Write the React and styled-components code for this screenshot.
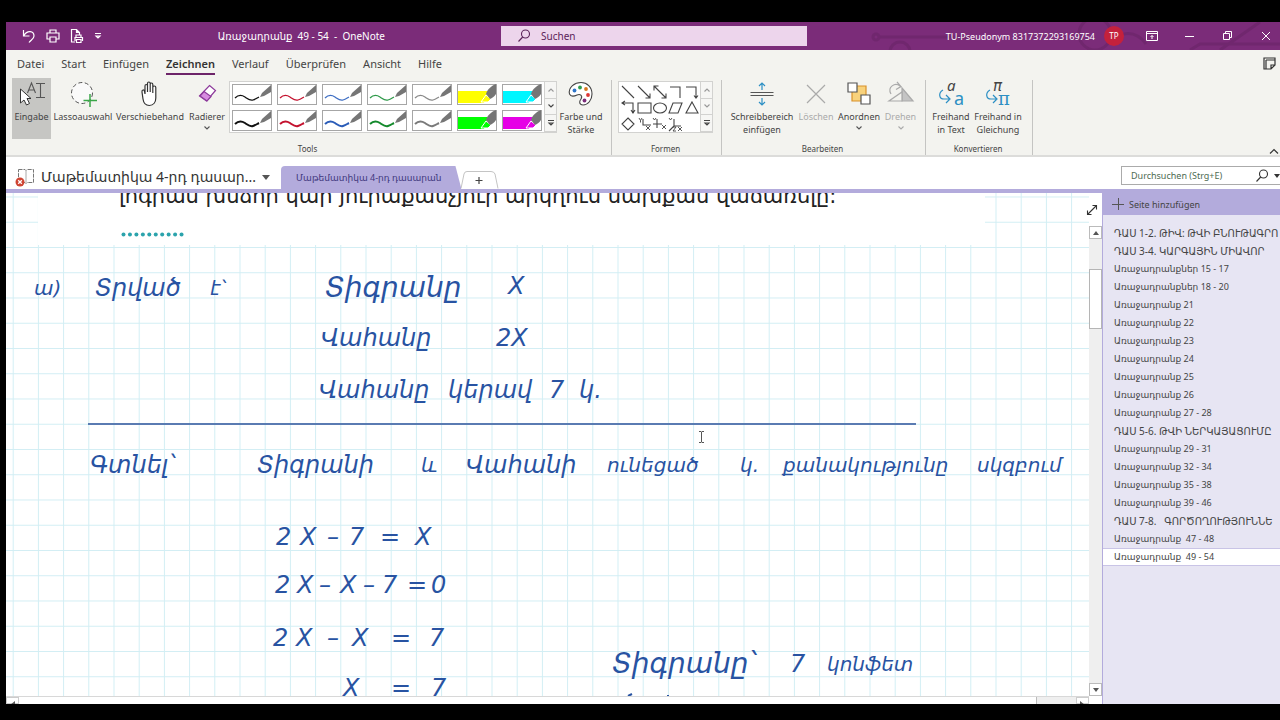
import React, { useState } from 'react'
import styled, { createGlobalStyle } from 'styled-components'

const uiFont = '"Noto Sans", "DejaVu Sans", sans-serif'

const tabs = ['Datei', 'Start', 'Einfügen', 'Zeichnen', 'Verlauf', 'Überprüfen', 'Ansicht', 'Hilfe']

const pens = [
	{ color: '#111', w: 1.3 }, { color: '#c4122f', w: 1.3 }, { color: '#3f6fc4', w: 1.3 },
	{ color: '#2f9a4a', w: 1.3 }, { color: '#8a8a8a', w: 1.3 },
	{ color: '#ffff00', marker: true }, { color: '#00f6ff', marker: true },
	{ color: '#111', w: 2 }, { color: '#c4122f', w: 2 }, { color: '#2a5cb8', w: 2 },
	{ color: '#148a2c', w: 2 }, { color: '#7a7a7a', w: 2 },
	{ color: '#00ff00', marker: true }, { color: '#e600e6', marker: true },
]

const pages = [
	'ԴԱՍ 1-2. ԹԻՎ: ԹՎԻ ԲՆՈՒԹԱԳՐՈ',
	'ԴԱՍ 3-4. ԿԱՐԳԱՅԻՆ ՄԻԱՎՈՐ',
	'Առաջադրանքներ 15 - 17',
	'Առաջադրանքներ 18 - 20',
	'Առաջադրանք 21',
	'Առաջադրանք 22',
	'Առաջադրանք 23',
	'Առաջադրանք 24',
	'Առաջադրանք 25',
	'Առաջադրանք 26',
	'Առաջադրանք 27 - 28',
	'ԴԱՍ 5-6. ԹՎԻ ՆԵՐԿԱՅԱՑՈՒՄԸ',
	'Առաջադրանք 29 - 31',
	'Առաջադրանք 32 - 34',
	'Առաջադրանք 35 - 38',
	'Առաջադրանք 39 - 46',
	'ԴԱՍ 7-8.   ԳՈՐԾՈՂՈՒԹՅՈՒՆՆԵ',
	'Առաջադրանք  47 - 48',
	'Առաջադրանք  49 - 54',
]

// ink notes, placed freely on the page canvas
const notes = [
	{ x: 28, y: 75, size: 20, text: 'ա)' },
	{ x: 89, y: 75, size: 24, text: 'Տրված' },
	{ x: 204, y: 75, size: 20, text: 'է՝' },
	{ x: 319, y: 75, size: 28, text: 'Տիգրանը' },
	{ x: 502, y: 73, size: 24, text: 'X' },
	{ x: 315, y: 125, size: 24, text: 'Վահանը' },
	{ x: 490, y: 125, size: 24, text: '2X' },
	{ x: 313, y: 177, size: 24, text: 'Վահանը' },
	{ x: 442, y: 177, size: 24, text: 'կերավ' },
	{ x: 543, y: 177, size: 24, text: '7' },
	{ x: 573, y: 177, size: 24, text: 'կ.' },
	{ x: 84, y: 252, size: 24, text: 'Գտնել՝' },
	{ x: 251, y: 252, size: 24, text: 'Տիգրանի' },
	{ x: 415, y: 252, size: 20, text: 'և' },
	{ x: 460, y: 252, size: 24, text: 'Վահանի' },
	{ x: 601, y: 252, size: 20, text: 'ունեցած' },
	{ x: 734, y: 252, size: 20, text: 'կ.' },
	{ x: 777, y: 252, size: 20, text: 'քանակությունը' },
	{ x: 971, y: 252, size: 20, text: 'սկզբում' },
	{ x: 270, y: 324, size: 24, text: '2' },
	{ x: 294, y: 324, size: 24, text: 'X' },
	{ x: 321, y: 324, size: 24, text: '–' },
	{ x: 343, y: 324, size: 24, text: '7' },
	{ x: 374, y: 324, size: 24, text: '=' },
	{ x: 409, y: 324, size: 24, text: 'X' },
	{ x: 269, y: 372, size: 24, text: '2' },
	{ x: 291, y: 372, size: 24, text: 'X' },
	{ x: 313, y: 372, size: 24, text: '–' },
	{ x: 334, y: 372, size: 24, text: 'X' },
	{ x: 357, y: 372, size: 24, text: '–' },
	{ x: 376, y: 372, size: 24, text: '7' },
	{ x: 401, y: 372, size: 24, text: '=' },
	{ x: 425, y: 372, size: 24, text: '0' },
	{ x: 267, y: 425, size: 24, text: '2' },
	{ x: 290, y: 425, size: 24, text: 'X' },
	{ x: 321, y: 425, size: 24, text: '–' },
	{ x: 346, y: 425, size: 24, text: 'X' },
	{ x: 385, y: 425, size: 24, text: '=' },
	{ x: 423, y: 425, size: 24, text: '7' },
	{ x: 337, y: 475, size: 24, text: 'X' },
	{ x: 385, y: 475, size: 24, text: '=' },
	{ x: 425, y: 475, size: 24, text: '7' },
	{ x: 606, y: 451, size: 28, text: 'Տիգրանը՝' },
	{ x: 784, y: 451, size: 24, text: '7' },
	{ x: 821, y: 451, size: 20, text: 'կոնֆետ' },
]

const Pen = ({ color, w, marker }) => (
	<svg width="40" height="21" viewBox="0 0 40 21">
		<rect x=".5" y=".5" width="39" height="20" fill="#fff" stroke="#a6a6a6" />
		{marker ? (
			<>
				<path d="M1 7h30l-4 12H1z" fill={color} />
				<path d="M24 18l5-7 5 4-3 3z" fill={color} stroke="#fff" />
				<path d="M29 10c1-4 5-8 10-10v10c-2 3-4 4-6 5z" fill="#757575" />
			</>
		) : (
			<>
				<path d="M3 14c4-4 7-3 10-1s5 4 8 3 4-2 6-3" fill="none" stroke={color} strokeWidth={w} />
				<path d="M28 13l2-4 9-8v7l-7 4z" fill="#757575" />
			</>
		)}
	</svg>
)

const Chevron = ({ up, color = '#555' }) => (
	<svg width="8" height="6" viewBox="0 0 8 6" fill="none" stroke={color} strokeWidth="1.1">
		<path d={up ? 'M1.5 4.5L4 2l2.5 2.5' : 'M1.5 1.5L4 4l2.5-2.5'} />
	</svg>
)

const More = () => (
	<svg width="8" height="8" viewBox="0 0 8 8" fill="none" stroke="#444" strokeWidth="1.1">
		<path d="M1 1.5h6M2 4l2 2 2-2z" />
	</svg>
)

const SearchIcon = ({ size = 14, color }) => (
	<svg width={size} height={size} viewBox="0 0 14 14" fill="none" stroke={color} strokeWidth="1.1">
		<circle cx="8.5" cy="5" r="4" />
		<path d="M5.7 8L1.5 12.5" />
	</svg>
)

const icons = {
	eingabe: (
		<svg width="28" height="26" viewBox="0 0 28 26" fill="none" stroke="#555">
			<path d="M9.500 12l4-10 4 10M11 9h5M18 2.500h9M18 16.500h9M22.500 2.500v14" strokeWidth="1.100" />
			<path d="M2.500 8v14l3.500-3 2.500 5 3-1.500-2.500-5h4z" fill="#fff" stroke="#333" />
		</svg>
	),
	lasso: (
		<svg width="28" height="26" viewBox="0 0 28 26" fill="none">
			<circle cx="13" cy="12" r="10.500" stroke="#555" strokeDasharray="4 2.500" fill="#fafafa" />
			<path d="M21 13v13M14.500 19.500H28" stroke="#3aa648" strokeWidth="1.500" />
		</svg>
	),
	hand: (
		<svg width="20" height="26" viewBox="0 0 20 26" fill="#fff" stroke="#333" strokeWidth="1.200">
			<path d="M3 18L2 11c-.3-2.500 2-2.700 2.500-.6L5 13V5c0-2 2.500-2 2.500 0v6-8.500c0-2 2.700-2 2.700 0V11 3.500c0-2 2.600-2 2.600 0V12 6.500c0-2 3-2 3 0V17c0 4-2.200 7.500-6.500 7.500-4 0-5.800-3-6.300-6.500z" />
		</svg>
	),
	eraser: (
		<svg width="22" height="26" viewBox="0 0 22 26" stroke="#8d3a9b" strokeWidth="1.200">
			<path d="M13.500 4.500l6 5-9 10.500-7-5z" fill="#fff" />
			<path d="M8 10.500l7 5-4 4.500-7-5z" fill="#d78ce0" />
		</svg>
	),
	palette: (
		<svg width="26" height="26" viewBox="0 0 26 26">
			<path d="M1.500 13C0 6 7 1.500 13 1.500c6 0 11 4.500 11 11.500 0 6-4 11-9 11-4 0-4-3.500-2-6 2-3.500-1-5.500-4-4-3 1.500-6 2-7.500-1z" fill="#fff" stroke="#444" strokeWidth="1.100" />
			<circle cx="6.500" cy="9.500" r="1.900" fill="#2e75c9" />
			<circle cx="12" cy="6.500" r="1.900" fill="#2f9e4e" />
			<circle cx="18" cy="8" r="1.900" fill="#d8761c" />
			<circle cx="20" cy="14" r="1.900" fill="#dc3535" />
			<circle cx="16.500" cy="19.500" r="1.900" fill="#7b2c79" />
		</svg>
	),
	space: (
		<svg width="26" height="26" viewBox="0 0 26 26" fill="none">
			<path d="M1.500 11.500h23M1.500 14.500h23" stroke="#555" strokeWidth="1.200" />
			<path d="M13 9V2M10 5l3-3 3 3M13 17v7M10 21l3 3 3-3" stroke="#2c8fc4" strokeWidth="1.200" />
		</svg>
	),
	remove: (
		<svg width="22" height="26" viewBox="0 0 22 26" stroke="#aaa" strokeWidth="1.200">
			<path d="M2 4l18 18M20 4L2 22" />
		</svg>
	),
	arrange: (
		<svg width="26" height="26" viewBox="0 0 26 26" strokeWidth="1.200">
			<path d="M6 5h14v15H6z" fill="#f8d27c" stroke="#d9922b" />
			<path d="M2 2h9v9H2zM15 14h9v9h-9z" fill="#fff" stroke="#555" />
		</svg>
	),
	rotate: (
		<svg width="26" height="26" viewBox="0 0 26 26" fill="none" stroke="#aaa" strokeWidth="1.200">
			<path d="M14 7l11 13H14z" fill="#c4c4c4" />
			<path d="M14 11v9H1z" fill="#f3f3ef" />
			<path d="M3 13C-1 6 7 1 12 5M9 1l4 4.500-5 3" />
		</svg>
	),
	inkText: (
		<svg width="26" height="26" viewBox="0 0 26 26" fill="none">
			<text x="9" y="10" fontFamily="Noto Sans" fontStyle="italic" fontSize="15" fill="#444">a</text>
			<text x="16" y="24" fontFamily="Noto Sans" fontSize="18" fill="#2c8fc4">a</text>
			<path d="M5 9c-5 3-4 9 1 9h5M8 14l4 4-4 4" stroke="#2c8fc4" strokeWidth="1.200" />
		</svg>
	),
	inkMath: (
		<svg width="26" height="26" viewBox="0 0 26 26" fill="none">
			<text x="8" y="10" fontFamily="DejaVu Sans" fontStyle="italic" fontSize="15" fill="#444">π</text>
			<text x="13" y="24" fontFamily="DejaVu Serif" fontSize="18" fill="#2c8fc4">π</text>
			<path d="M5 9c-5 3-4 9 1 9h5M8 14l4 4-4 4" stroke="#2c8fc4" strokeWidth="1.200" />
		</svg>
	),
}

const Shapes = () => (
	<svg width="81" height="50" viewBox="0 0 81 50" fill="none" stroke="#444" strokeWidth="1.100">
		<path d="M3 4l12 12M19 4l12 12M31 11.500V16h-4.500M35 4l12 12M47 11.500V16h-4.500M35 8.500V4h4.500M51 5h10v11M67 5h10v11M75 13.500l2 2.500 2-2.500" />
		<path d="M4 21h10v9M6 19l-3 2 3 2M12 28l2 3 2-3M19 21h13v10H19zM54 21h9l-4 10h-9zM73 20l6 11H67z" />
		<ellipse cx="41" cy="26" rx="6.500" ry="5" />
		<path d="M9 36l6 6-6 6-6-6zM24 37v6h8M38 37v9M34 42h9M55 37v7h7M55 44l-5 5" />
		<path d="M20 36l1.500 2.500L23 36M21.500 38.500v2M27 44l4 4M31 44l-4 4M34 36l1.500 2 1.500-2M43 43l4 4M47 43l-4 4M50 36l1.500 2 1.500-2M59 45l4 4M63 45l-4 4M54 45h3l-3 4h3" strokeWidth=".9" />
	</svg>
)

const ToolButton = ({ icon, label, width, active, disabled, menu }) => (
	<Tool $width={width} $active={active} disabled={disabled}>
		<IconBox>{icons[icon]}</IconBox>
		<ToolLabel>{label}</ToolLabel>
		{menu && <Chevron color={disabled ? '#aaa' : '#555'} />}
	</Tool>
)

const GallerySteps = ({ name, last }) => (
	<Steps>
		<button aria-label={name + ' zurück'}><Chevron up color="#999" /></button>
		<button aria-label={name + ' weiter'}><Chevron color={last ? '#999' : '#444'} /></button>
		<button aria-label={name + ' alle'}><More /></button>
	</Steps>
)

const App = () => {
	const [tab, setTab] = useState('Zeichnen')
	const [page, setPage] = useState(pages.length - 1)

	return (
		<Screen>
			<Global />
			<TitleBar>
				<Circuit width="420" height="28" viewBox="0 0 420 28" fill="none" stroke="#6a2468" strokeWidth="3">
					<path d="M20 15h90M250 22c10-14 26-14 36 0M330 28l10-6h80M360 28l40-28" />
					<circle cx="16" cy="15" r="3" />
					<circle cx="40" cy="30" r="10" />
					<circle cx="235" cy="12" r="16" />
				</Circuit>
				<TitleLeft>
					<QuickAccess>
						<button aria-label="Rückgängig">
							<svg width="14" height="16" viewBox="0 0 14 16"><path d="M1.500 2v6h6M2 7.500C5 2 12 2.500 12 8c0 3-3 4-5 6.500" /></svg>
						</button>
						<button aria-label="Drucken">
							<svg width="14" height="16" viewBox="0 0 14 16"><path d="M4 5V2h6v3M4 11H1V5h12v6h-3M4 9h6v5H4z" /></svg>
						</button>
						<button aria-label="Seitenansicht">
							<svg width="14" height="16" viewBox="0 0 14 16"><path d="M5 14H1.500V1.500h5l3 3V7M6.500 1.500v3h3M6 9V7h5v2M5 13V9.500h7.500V13M6.500 11.500h4.500v3H6.500z" /></svg>
						</button>
						<button aria-label="Anpassen">
							<svg width="8" height="8" viewBox="0 0 8 8"><path d="M1 1.500h6M2 4l2 2 2-2z" /></svg>
						</button>
					</QuickAccess>
					<Title>Առաջադրանք  49 - 54  -  OneNote</Title>
				</TitleLeft>
				<TopSearch>
					<SearchIcon color="#5b2359" />
					<input type="text" placeholder="Suchen" aria-label="Suchen" />
				</TopSearch>
				<TitleRight>
					<span>TU-Pseudonym 8317372293169754</span>
					<Avatar>TP</Avatar>
					<WindowButton aria-label="Menüband-Anzeigeoptionen">
						<svg width="12" height="10" viewBox="0 0 12 10"><path d="M.5.500h11v9H.5zM.5 2.500h11M6 8V4.500M4.500 6L6 4.500 7.500 6" /></svg>
					</WindowButton>
					<WindowButton aria-label="Minimieren">
						<svg width="10" height="10" viewBox="0 0 10 10"><path d="M0 5.500h9" /></svg>
					</WindowButton>
					<WindowButton aria-label="Verkleinern">
						<svg width="10" height="10" viewBox="0 0 10 10"><path d="M.5 2.500h6v6h-6zM2.500 2.500v-2h6v6h-2" /></svg>
					</WindowButton>
					<WindowButton aria-label="Schließen">
						<svg width="10" height="10" viewBox="0 0 10 10"><path d="M1 1l8 8M9 1L1 9" /></svg>
					</WindowButton>
				</TitleRight>
			</TitleBar>

			<Tabs>
				{tabs.map((name) => (
					<Tab key={name} $active={name === tab} onClick={() => setTab(name)}>{name}</Tab>
				))}
				<NoteButton aria-label="Notizfeed">
					<svg width="13" height="13" viewBox="0 0 13 13" fill="none" stroke="#333" strokeWidth="1.200"><path d="M1 1h11v7l-4 4H1zM12 8H8v4M3 3h9M3 3v9" /></svg>
				</NoteButton>
			</Tabs>

			<Ribbon>
				<Group>
					<GroupRow>
						<ToolButton icon="eingabe" label="Eingabe" width={39} active />
						<ToolButton icon="lasso" label="Lassoauswahl" width={60} />
						<ToolButton icon="hand" label="Verschiebehand" width={70} />
						<ToolButton icon="eraser" label="Radierer" width={40} menu />
						<Gallery>
							<PenGrid>
								{pens.map((p, i) => (
									<button key={i} aria-label={(p.marker ? 'Textmarker ' : 'Stift ') + (i + 1)}><Pen {...p} /></button>
								))}
							</PenGrid>
							<GallerySteps name="Stifte" />
						</Gallery>
						<ToolButton icon="palette" label={'Farbe und\nStärke'} width={44} />
					</GroupRow>
					<GroupLabel>Tools</GroupLabel>
				</Group>
				<Group>
					<GroupRow>
						<Gallery>
							<Shapes />
							<GallerySteps name="Formen" last />
						</Gallery>
					</GroupRow>
					<GroupLabel>Formen</GroupLabel>
				</Group>
				<Group>
					<GroupRow>
						<ToolButton icon="space" label={'Schreibbereich\neinfügen'} width={68} />
						<ToolButton icon="remove" label="Löschen" width={36} disabled />
						<ToolButton icon="arrange" label="Anordnen" width={46} menu />
						<ToolButton icon="rotate" label="Drehen" width={33} disabled menu />
					</GroupRow>
					<GroupLabel>Bearbeiten</GroupLabel>
				</Group>
				<Group>
					<GroupRow>
						<ToolButton icon="inkText" label={'Freihand\nin Text'} width={38} />
						<ToolButton icon="inkMath" label={'Freihand in\nGleichung'} width={52} />
					</GroupRow>
					<GroupLabel>Konvertieren</GroupLabel>
				</Group>
				<Collapse aria-label="Menüband reduzieren">
					<svg width="10" height="7" viewBox="0 0 10 7" fill="none" stroke="#333" strokeWidth="1.200"><path d="M1 5.500l4-4 4 4" /></svg>
				</Collapse>
			</Ribbon>

			<SectionBar>
				<Notebook>
					<svg width="20" height="20" viewBox="0 0 20 20">
						<path d="M3.500 2.500h6.500l1 1 1-1h6.500v13H12l-1 1-1-1H3.500z" fill="#fff" stroke="#777" strokeDasharray="4 1" />
						<path d="M11 3.500v12" stroke="#aaa" />
						<circle cx="5" cy="15" r="4.500" fill="#cf4433" />
						<path d="M3.200 13.200l3.600 3.600M6.800 13.200l-3.600 3.600" stroke="#fff" strokeWidth="1.300" />
					</svg>
					<span>Մաթեմատիկա 4-րդ դասար...</span>
					<svg width="8" height="5" viewBox="0 0 8 5"><path d="M0 0h8L4 5z" fill="#555" /></svg>
				</Notebook>
				<SectionTab>Մաթեմատիկա 4-րդ դասարան</SectionTab>
				<AddTab aria-label="Neuer Abschnitt">
					<svg width="38" height="18" viewBox="0 0 38 18" fill="none">
						<path d="M0 17.500L3 3Q3.500.500 6 .500h24q3 0 4 2.500l3 14.500" stroke="#c4c4c4" />
						<path d="M14.500 9.500h7M18 6v7" stroke="#444" strokeWidth="1.200" />
					</svg>
				</AddTab>
				<PageSearch>
					<input type="text" placeholder="Durchsuchen (Strg+E)" aria-label="Durchsuchen" />
					<SearchIcon color="#333" />
					<svg width="6" height="4" viewBox="0 0 6 4"><path d="M0 0h6L3 4z" fill="#333" /></svg>
				</PageSearch>
			</SectionBar>

			<Body>
				<CanvasColumn>
					<Canvas>
						<Paper width="100%" height="100%">
							<defs>
								<pattern id="ruling" x="6.700" y="3.500" width="25.200" height="25.250" patternUnits="userSpaceOnUse">
									<path d="M.5 0v25.250M0 .5h25.200" stroke="#d2eef4" fill="none" />
								</pattern>
							</defs>
							<rect width="100%" height="100%" fill="url(#ruling)" />
							<rect x="32" width="947" height="52" fill="#fff" />
							<path d="M82 231h828" stroke="#5a7bb2" strokeWidth="2" />
							<path d="M622 503l4-2M661 503h2" stroke="#2853a2" strokeWidth="2" />
							<g fill="#2ba3ac">
								{Array.from({ length: 10 }, (_, i) => <circle key={i} cx={117.500 + i * 6.450} cy="41.500" r="2" />)}
							</g>
						</Paper>
						<Printed>լոգրամ խնձոր կար յուրաքանչյուր արկղում նախքան վաճառելը:</Printed>
						{notes.map((n, i) => (
							<Ink key={i} $x={n.x} $y={n.y} $size={n.size}>{n.text}</Ink>
						))}
						<Caret width="7" height="12" viewBox="0 0 7 12" fill="none" stroke="#555">
							<path d="M1 .5h2l.5.500.5-.500h2M3.500 1v10M1 11.500h2l.5-.500.5.500h2" />
						</Caret>
					</Canvas>
					<HScroll>
						<button aria-label="Nach links"><svg width="5" height="8" viewBox="0 0 5 8"><path d="M5 0v8L0 4z" fill="#555" /></svg></button>
						<HThumb />
						<button aria-label="Nach rechts"><svg width="5" height="8" viewBox="0 0 5 8"><path d="M0 0v8l5-4z" fill="#555" /></svg></button>
					</HScroll>
				</CanvasColumn>
				<VScroll>
					<Expand aria-label="Vollbild">
						<svg width="12" height="12" viewBox="0 0 12 12" fill="none" stroke="#333" strokeWidth="1.100"><path d="M1.500 10.500l9-9M6.500 1.500h4v4M1.500 6.500v4h4" /></svg>
					</Expand>
					<button aria-label="Nach oben"><svg width="6" height="4" viewBox="0 0 6 4"><path d="M0 4h6L3 0z" fill="#555" /></svg></button>
					<VTrack><VThumb /></VTrack>
					<button aria-label="Nach unten"><svg width="6" height="4" viewBox="0 0 6 4"><path d="M0 0h6L3 4z" fill="#555" /></svg></button>
				</VScroll>
				<Sidebar>
					<AddPage>
						<svg width="12" height="12" viewBox="0 0 12 12" stroke="#555"><path d="M0 6.500h12M6.500 0v12" /></svg>
						Seite hinzufügen
					</AddPage>
					<PageList>
						{pages.map((name, i) => (
							<li key={name}>
								<PageLink
									href="#"
									$active={i === page}
									$heading={name.startsWith('ԴԱՍ')}
									onClick={(e) => { e.preventDefault(); setPage(i) }}
								>
									{name}
								</PageLink>
							</li>
						))}
					</PageList>
				</Sidebar>
			</Body>
		</Screen>
	)
}

export default App


const Global = createGlobalStyle`
	* {
		box-sizing: border-box;
	}

	body {
		margin: 0;
		background: #000;
		font-family: ${uiFont};
	}

	button, input {
		font: inherit;
		color: inherit;
		border: 0;
		padding: 0;
		background: none;
	}

	svg {
		display: block;
		flex: none;
	}
`
const Screen = styled.div`
	display: flex;
	flex-direction: column;
	height: 100vh;
	padding: 22px 0 16px 6px;
	overflow: hidden;
	color: #444;
	font-size: 10px;
`
const TitleBar = styled.header`
	position: relative;
	flex: none;
	display: grid;
	grid-template-columns: minmax(0, 495fr) minmax(0, 306fr) minmax(0, 473fr);
	align-items: center;
	height: 28px;
	background: #7b2c79;
	color: #fff;
`
const Circuit = styled.svg`
	position: absolute;
	right: 0;
	top: 0;
	opacity: 0.6;
`
const TitleLeft = styled.div`
	display: flex;
	align-items: center;
	justify-content: space-between;
	padding: 0 116px 0 16px;
`
const QuickAccess = styled.div`
	display: flex;
	align-items: center;
	gap: 10px;

	svg {
		fill: none;
		stroke: #fff;
		stroke-width: 1.2;
	}
`
const Title = styled.span`
	white-space: pre;
`
const TopSearch = styled.label`
	display: flex;
	align-items: center;
	gap: 10px;
	height: 20px;
	padding: 0 16px;
	background: #edd5ec;
	color: #5b2359;

	input {
		flex: 1;
		min-width: 0;
		outline: 0;
	}
	input::placeholder {
		color: #5b2359;
		opacity: 1;
	}
`
const TitleRight = styled.div`
	position: relative;
	display: flex;
	align-items: center;
	justify-content: flex-end;
	font-size: 9px;
`
const Avatar = styled.span`
	width: 20px;
	margin: 0 9px;
	border-radius: 50%;
	background: #c4213c;
	font-size: 8px;
	line-height: 20px;
	text-align: center;
`
const WindowButton = styled.button`
	display: flex;
	justify-content: center;
	width: 38px;

	&:last-child {
		width: 33px;
		padding-left: 5px;
	}
	svg {
		fill: none;
		stroke: #fff;
	}
`
const Tabs = styled.nav`
	flex: none;
	display: flex;
	align-items: center;
	gap: 17px;
	height: 27px;
	padding-left: 11px;
	background: #f3f3ef;
`
const Tab = styled.button`
	font-size: 11px;
	line-height: 22px;
	font-weight: ${props => props.$active ? 600 : 400};
	color: ${props => props.$active ? '#333' : '#444'};
	box-shadow: ${props => props.$active ? 'inset 0 -2px #6d2469' : 'none'};
`
const NoteButton = styled.button`
	margin-left: auto;
	margin-right: 4px;
`
const Ribbon = styled.div`
	flex: none;
	display: flex;
	height: 80px;
	background: #f3f3ef;
	border-bottom: 2px solid #dcdcda;
`
const Group = styled.section`
	display: flex;
	flex-direction: column;
	justify-content: space-between;
	margin-top: 3px;
	padding: 0 8px 0 6px;
	border-right: 1px solid #c4c4c2;
`
const GroupRow = styled.div`
	display: flex;
	gap: 2px;
`
const GroupLabel = styled.div`
	font-size: 8px;
	line-height: 12px;
	text-align: center;
`
const Tool = styled.button`
	display: flex;
	flex-direction: column;
	align-items: center;
	width: ${props => props.$width}px;
	height: 61px;
	margin-top: -2px;
	padding-top: 3px;
	background: ${props => props.$active ? '#c6c6c3' : 'none'};
	font-size: 9px;
	line-height: 13px;

	&:disabled {
		color: #aaa;
	}
`
const ToolLabel = styled.span`
	padding-bottom: 2px;
	white-space: pre;
`
const IconBox = styled.span`
	height: 29px;

	svg {
		overflow: visible;
	}
`
const Gallery = styled.div`
	display: flex;
	height: 52px;
	margin: 1px 0 0;
	background: #fff;
	border: 1px solid #d2d2d0;
`
const PenGrid = styled.div`
	display: grid;
	grid-template-columns: repeat(7, 40px);
	gap: 5px;
	padding: 2px;
`
const Steps = styled.div`
	display: grid;
	grid-template-rows: repeat(3, 1fr);
	width: 12px;

	button {
		display: grid;
		place-items: center;
		border-left: 1px solid #d2d2d0;
		border-bottom: 1px solid #d2d2d0;
		background: #f6f6f4;
	}
`
const Collapse = styled.button`
	align-self: flex-end;
	margin-left: auto;
	margin-right: 1px;
`
const SectionBar = styled.div`
	flex: none;
	display: flex;
	align-items: flex-end;
	height: 36px;
	background: #fff;
	border-bottom: 4px solid #b3abdc;
`
const Notebook = styled.button`
	display: flex;
	align-items: center;
	gap: 6px;
	width: 275px;
	padding-left: 9px;
	font-size: 14px;
	line-height: 24px;
	color: #333;

	span {
		white-space: nowrap;
	}
`
const SectionTab = styled.button`
	height: 23px;
	padding: 0 20px 0 15px;
	background: #b3abdc;
	border-radius: 4px 0 0 0;
	clip-path: polygon(0 0, calc(100% - 6px) 0, 100% 100%, 0 100%);
	color: #40377c;
	font-size: 9px;
	white-space: nowrap;
`
const AddTab = styled.button`
	height: 18px;
`
const PageSearch = styled.label`
	display: flex;
	align-items: center;
	gap: 5px;
	width: 160px;
	height: 19px;
	margin: 0 -1px 4px auto;
	padding: 0 0 0 9px;
	border: 1px solid #ababab;
	font-size: 9px;

	input {
		flex: 1;
		min-width: 0;
		outline: 0;
	}
	input::placeholder {
		color: #4d6b52;
		opacity: 1;
	}
`
const Body = styled.main`
	flex: 1;
	display: flex;
	min-height: 0;
	background: #fff;
`
const CanvasColumn = styled.div`
	flex: 1;
	display: flex;
	flex-direction: column;
	min-width: 0;
`
const Canvas = styled.div`
	position: relative;
	flex: 1;
	overflow: hidden;
	background: #fff;
`
const Paper = styled.svg`
	position: absolute;
	inset: 0;
`
const Printed = styled.p`
	position: absolute;
	left: 113px;
	top: -13px;
	margin: 0;
	font: 21px/32px "DejaVu Sans", sans-serif;
	color: #222;
	white-space: nowrap;
`
const Ink = styled.span`
	position: absolute;
	left: ${props => props.$x}px;
	top: ${props => props.$y}px;
	font: italic ${props => props.$size}px/40px "DejaVu Sans", sans-serif;
	color: #2853a2;
	white-space: nowrap;
`
const Caret = styled.svg`
	position: absolute;
	left: 692px;
	top: 238px;
`
const HScroll = styled.div`
	flex: none;
	display: flex;
	height: 8px;
	overflow: hidden;
	background: #efefef;
	border-top: 1px solid #d8d8d8;

	button {
		display: flex;
		justify-content: center;
		width: 13px;
		padding-top: 3px;
		background: #fff;
		border: 1px solid #ccc;
	}
	button:last-child {
		margin-left: auto;
	}
`
const HThumb = styled.div`
	width: 94%;
	background: #fff;
	border-right: 1px solid #bbb;
`
const VScroll = styled.div`
	display: flex;
	flex-direction: column;
	align-items: flex-end;
	width: 13px;
	margin-bottom: 8px;

	button {
		display: grid;
		place-items: center;
		width: 13px;
		height: 13px;
		border: 1px solid #bbb;
		background: #fff;
	}
	&& > :first-child {
		width: 21px;
		height: 33px;
		border: 0;
		background: none;
	}
`
const Expand = styled.button`
	position: relative;
`
const VTrack = styled.div`
	flex: 1;
	width: 13px;
	padding-top: 30px;
	background: #efefef;
`
const VThumb = styled.div`
	height: 60px;
	background: #fff;
	border: 1px solid #b5b5b5;
`
const Sidebar = styled.aside`
	width: 178px;
	background: #e7e5f3;
	border-left: 1px solid #b3abdc;
	overflow: hidden;
`
const AddPage = styled.button`
	display: flex;
	align-items: center;
	gap: 5px;
	width: 100%;
	height: 22px;
	padding-left: 9px;
	background: #b3abdc;
	font-size: 9px;
`
const PageList = styled.ul`
	margin: 9px 0 0;
	padding: 0;
	list-style: none;
`
const PageLink = styled.a`
	display: block;
	height: 18px;
	padding-left: 11px;
	background: ${props => props.$active ? '#fff' : 'none'};
	box-shadow: ${props => props.$active ? 'inset 0 1px #c9c4e6, inset 0 -1px #c9c4e6' : 'none'};
	color: #444;
	font-size: ${props => props.$heading ? 10 : 9}px;
	line-height: 18px;
	text-decoration: none;
	white-space: pre;
`
